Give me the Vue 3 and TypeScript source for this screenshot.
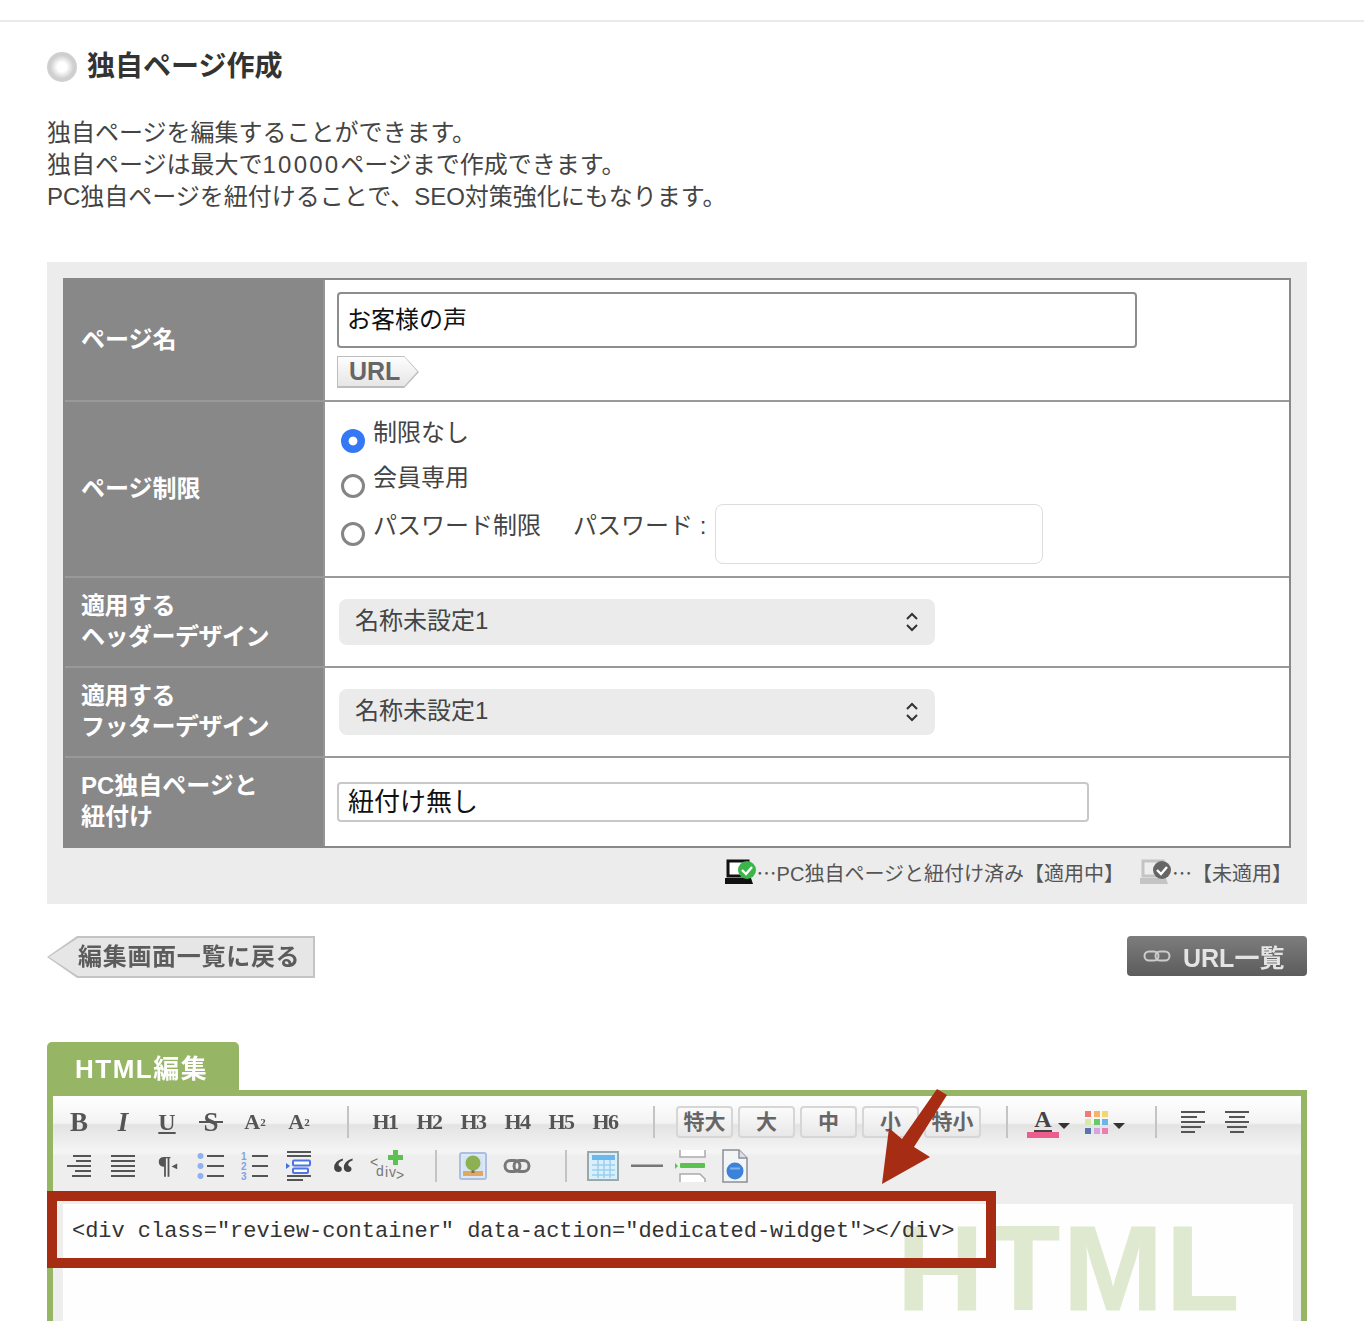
<script setup lang="ts">
const fmtTools = ['B', 'I', 'U', 'S']
const headings = ['H1', 'H2', 'H3', 'H4', 'H5', 'H6']
const sizes = ['特大', '大', '中', '小', '特小']
const palette = ['#f27a72', '#f6b36a', '#f0d86e', '#d8e8a8', '#6cc86e', '#6db4ec', '#5576b0', '#d6a4e0', '#f07cb4']
const rows = [
  { label: ['適用する', 'ヘッダーデザイン'] },
  { label: ['適用する', 'フッターデザイン'] },
]
</script>

<template>
  <div class="page">
    <div class="topbar"></div>
    <h1 class="heading"><span class="bullet"></span>独自ページ作成</h1>
    <p class="intro">
      独自ページを編集することができます。<br />
      独自ページは最大で<span class="digits">10000</span>ページまで作成できます。<br />
      PC独自ページを紐付けることで、SEO対策強化にもなります。
    </p>

    <section class="panel">
      <div class="form">
        <div class="row row-name">
          <div class="label">ページ名</div>
          <div class="cell">
            <input class="text-input name-input" value="お客様の声" />
            <span class="url-tag"><span>URL</span></span>
          </div>
        </div>
        <div class="row row-limit">
          <div class="label">ページ制限</div>
          <div class="cell limit-cell">
            <label class="radio-line"><input class="radio" type="radio" name="limit" checked />制限なし</label>
            <label class="radio-line second"><input class="radio" type="radio" name="limit" />会員専用</label>
            <div class="radio-line third">
              <input class="radio" type="radio" name="limit" />
              <span class="pw-label">パスワード制限</span>
              <span class="pw-label pw-second">パスワード :</span>
              <input class="pw-input" />
            </div>
          </div>
        </div>
        <div v-for="r in rows" :key="r.label[1]" class="row row-design">
          <div class="label design-label">{{ r.label[0] }}<br />{{ r.label[1] }}</div>
          <div class="cell select-cell">
            <div class="select">
              <span class="select-text">名称未設定1</span>
              <svg width="14" height="22" viewBox="0 0 14 22" fill="none" stroke="#333" stroke-width="2">
                <path d="M2 8l5-5 5 5M2 14l5 5 5-5" />
              </svg>
            </div>
          </div>
        </div>
        <div class="row row-design last">
          <div class="label">PC独自ページと<br />紐付け</div>
          <div class="cell link-cell">
            <input class="text-input link-input" value="紐付け無し" />
          </div>
        </div>
      </div>
      <div class="legend">
        <svg class="legend-icon" width="32" height="26" viewBox="0 0 32 26">
          <path d="M3 2h20v15H3z" fill="#fff" stroke="#111" stroke-width="3" />
          <path d="M0 19h26l2 6H0z" fill="#111" />
          <circle cx="22" cy="11" r="9" fill="#3bb54a" />
          <path d="M17 11l4 4 6-7" fill="none" stroke="#fff" stroke-width="2.4" />
        </svg>
        <span><span class="dots">…</span>PC独自ページと紐付け済み【適用中】</span>
        <svg class="legend-icon second" width="32" height="26" viewBox="0 0 32 26">
          <path d="M3 2h20v15H3z" fill="#eee" stroke="#c4c4c4" stroke-width="3" />
          <path d="M0 19h26l2 6H0z" fill="#c4c4c4" />
          <circle cx="22" cy="11" r="9" fill="#666" />
          <path d="M17 11l4 4 6-7" fill="none" stroke="#fff" stroke-width="2.4" />
        </svg>
        <span><span class="dots">…</span>【未適用】</span>
      </div>
    </section>

    <div class="actions">
      <a class="back-btn"><span class="back-inner"><span>編集画面一覧に戻る</span></span></a>
      <a class="url-btn">
        <svg width="28" height="12" viewBox="0 0 28 12" fill="none" stroke="#ccc" stroke-width="2">
          <rect x="1.500" y="1.500" width="14" height="9" rx="4.500" />
          <rect x="12.500" y="1.500" width="14" height="9" rx="4.500" />
        </svg>
        <span>URL一覧</span>
      </a>
    </div>

    <section class="editor-wrap">
      <div class="tab"><span>HTML編集</span></div>
      <div class="editor">
        <div class="toolbar">
          <div class="tool-row first">
            <span v-for="t in fmtTools" :key="t" class="tool glyph" :class="'g-' + t">{{ t }}</span>
            <span class="tool glyph small">A<sup>2</sup></span>
            <span class="tool glyph small">A<sub>2</sub></span>
            <span class="sep s1"></span>
            <span v-for="h in headings" :key="h" class="tool glyph heading-glyph">{{ h }}</span>
            <span class="sep s2"></span>
            <span class="sizes">
              <span v-for="s in sizes" :key="s" class="size-btn">{{ s }}</span>
            </span>
            <span class="sep s3"></span>
            <span class="color-tool">
              <span class="color-a">A</span>
            </span>
            <span class="caret near"></span>
            <span class="swatches">
              <i v-for="c in palette" :key="c" :style="{ background: c }"></i>
            </span>
            <span class="caret"></span>
            <span class="sep s4"></span>
            <span class="tool">
              <svg width="26" height="24" viewBox="0 0 26 24" stroke="#555" stroke-width="2.2">
                <path d="M1 2h24M1 7h16M1 12h24M1 17h20M1 22h14" />
              </svg>
            </span>
            <span class="tool">
              <svg width="26" height="24" viewBox="0 0 26 24" stroke="#555" stroke-width="2.2">
                <path d="M1 2h24M5 7h16M1 12h24M3 17h20M6 22h14" />
              </svg>
            </span>
          </div>
          <div class="tool-row">
            <span class="tool">
              <svg width="26" height="24" viewBox="0 0 26 24" stroke="#555" stroke-width="2.2">
                <path d="M7 2h18M10 7h15M1 12h24M9 17h16M6 22h19" />
              </svg>
            </span>
            <span class="tool">
              <svg width="26" height="24" viewBox="0 0 26 24" stroke="#555" stroke-width="2.2">
                <path d="M1 2h24M1 7h24M1 12h24M1 17h24M1 22h24" />
              </svg>
            </span>
            <span class="tool glyph pilcrow">¶<small>◂</small></span>
            <span class="tool">
              <svg width="28" height="28" viewBox="0 0 28 28">
                <g fill="#8fb2ee"><circle cx="3.500" cy="4" r="3" /><circle cx="3.500" cy="14" r="3" /><circle cx="3.500" cy="24" r="3" /></g>
                <path d="M10 4h17M10 14h17M10 24h17" stroke="#555" stroke-width="2.200" />
              </svg>
            </span>
            <span class="tool">
              <svg width="28" height="30" viewBox="0 0 28 30">
                <g fill="#7da4ea" font-family="Liberation Sans, sans-serif" font-size="10" font-weight="700">
                  <text x="0" y="9">1</text><text x="0" y="19">2</text><text x="0" y="29">3</text>
                </g>
                <path d="M11 5h16M11 15h16M11 25h16" stroke="#555" stroke-width="2.200" />
              </svg>
            </span>
            <span class="tool">
              <svg width="26" height="32" viewBox="0 0 26 32">
                <path d="M1 2h24M1 6h24M1 26h24M1 30h16" stroke="#555" stroke-width="2.200" />
                <path d="M0 13l4 3-4 3z" fill="#3f6fe0" />
                <rect x="7" y="10.500" width="17" height="5" rx="1" fill="#fff" stroke="#4d76e4" stroke-width="2" />
                <rect x="7" y="18.500" width="15" height="4.500" rx="1" fill="#fff" stroke="#4d76e4" stroke-width="2" />
              </svg>
            </span>
            <span class="tool glyph quote">“</span>
            <span class="tool">
              <svg width="40" height="36" viewBox="0 0 40 36">
                <text x="3 9 18 22 29" y="19 28 29 29 32" font-family="Liberation Sans, sans-serif" font-size="14" fill="#777">&lt;div&gt;</text>
                <path d="M26 2h5v5h5v5h-5v5h-5v-5h-5V7h5z" fill="#5cc24f" />
              </svg>
            </span>
            <span class="sep s5"></span>
            <span class="tool">
              <svg width="28" height="28" viewBox="0 0 28 28">
                <rect x="1" y="1" width="26" height="26" rx="2" fill="#dfe7f5" stroke="#a9bfe3" stroke-width="2" />
                <rect x="4" y="4" width="20" height="20" fill="#d4e4f2" />
                <rect x="4" y="19" width="20" height="5" fill="#e0a860" />
                <rect x="12.500" y="14" width="3" height="7" fill="#8a6d3b" />
                <circle cx="14" cy="11" r="7.500" fill="#8cb052" />
              </svg>
            </span>
            <span class="tool">
              <svg width="28" height="16" viewBox="0 0 28 16" fill="none" stroke="#777" stroke-width="3">
                <rect x="2" y="2.500" width="15" height="11" rx="5.500" />
                <rect x="11" y="2.500" width="15" height="11" rx="5.500" />
              </svg>
            </span>
            <span class="sep s6"></span>
            <span class="tool">
              <svg width="32" height="30" viewBox="0 0 32 30">
                <rect x="1" y="1" width="30" height="28" fill="#d9effb" stroke="#9aa" stroke-width="2" />
                <rect x="5" y="4" width="23" height="5" fill="#6cb8ee" />
                <path d="M5 14h23M5 19h23M5 24h23M11 9v18M17 9v18M23 9v18" stroke="#9bd0f0" stroke-width="1.500" />
              </svg>
            </span>
            <span class="tool">
              <svg width="32" height="4" viewBox="0 0 32 4"><rect width="32" height="2.500" y="0.500" fill="#777" /></svg>
            </span>
            <span class="tool">
              <svg width="32" height="32" viewBox="0 0 32 32" fill="none">
                <path d="M5 0v7h25V0" stroke="#aaa" stroke-width="1.500" fill="#fff" />
                <path d="M0 13l3 3-3 3z" fill="#5cc24f" />
                <rect x="5" y="13" width="25" height="5" rx="1" fill="#5cc24f" />
                <path d="M5 32v-8h20l5 5v3" stroke="#aaa" stroke-width="1.500" fill="#fff" />
              </svg>
            </span>
            <span class="tool">
              <svg width="26" height="34" viewBox="0 0 26 34">
                <path d="M1 1h16l8 8v24H1z" fill="#f2f4f6" stroke="#8a9095" stroke-width="1.500" />
                <path d="M17 1v8h8" fill="#dde" stroke="#8a9095" stroke-width="1.500" />
                <circle cx="13" cy="22" r="8.500" fill="#3b82d8" />
                <path d="M8 19.500h10" stroke="#7fb2ea" stroke-width="2" />
              </svg>
            </span>
          </div>
        </div>
        <div class="editor-body">
          <div class="code-area">
            <span class="watermark">HTML</span>
            <code class="code">&lt;div class="review-container" data-action="dedicated-widget"&gt;&lt;/div&gt;</code>
          </div>
        </div>
      </div>
      <div class="highlight"></div>
      <svg class="arrow" width="90" height="110" viewBox="0 0 90 110">
        <path d="M67 4L77 10L44 62L60 72L12 99L19 43L32 54Z" fill="#a62c14" />
      </svg>
    </section>
  </div>
</template>

<style>
html,
body {
  margin: 0;
  background: #fff;
}
</style>

<style scoped>
.page {
  height: 1321px;
  overflow: hidden;
  box-sizing: border-box;
  padding: 0 57px 0 47px;
  font-family: "Liberation Sans", "Noto Sans CJK JP", sans-serif;
  color: #444;
  position: relative;
}
.topbar {
  height: 20px;
  border-bottom: 2px solid #e9eaee;
  margin: 0 -57px 0 -47px;
}
.heading {
  display: flex;
  align-items: center;
  height: 30px;
  margin: 30px 0 0;
  font-size: 28px;
  line-height: 30px;
  font-weight: 700;
  color: #333;
}
.bullet {
  width: 30px;
  height: 30px;
  margin-right: 10px;
  border-radius: 50%;
  background: radial-gradient(circle, #fff 0 22%, #cfcfcf 55%, #d0d0d0 88%, #eaeaea 100%);
}
.intro {
  margin: 35px 0 49px;
  font-size: 24px;
  line-height: 32px;
  color: #444;
}
.digits {
  letter-spacing: 2.200px;
}
.panel {
  background: #ececec;
  padding: 16px 16px 0;
  height: 642px;
  box-sizing: border-box;
}
.form {
  border: 2px solid #888;
  background: #fff;
}
.row {
  display: grid;
  grid-template-columns: 258px 1fr;
  border-bottom: 2px solid #999;
}
.row.last {
  border-bottom: 0;
}
.row-name {
  height: 120px;
}
.row-limit {
  height: 174px;
}
.row-design {
  height: 88px;
}
.label {
  display: block;
  align-content: center;
  background: #888;
  color: #fff;
  padding: 0 0 2px 16px;
  border-right: 2px solid #959595;
  margin-right: -2px;
  font-size: 24px;
  line-height: 31px;
  font-weight: 700;
}
.design-label {
  letter-spacing: -0.500px;
}
.cell {
  padding-left: 14px;
  margin-left: 2px;
  min-width: 0;
}
.text-input {
  display: block;
  box-sizing: border-box;
  background: #fff;
  color: #111;
  font: inherit;
  outline: none;
}
.name-input {
  width: 800px;
  height: 56px;
  margin: 12px 0 8px -2px;
  padding: 0 8px 6px;
  border: 2px solid #8d8d8d;
  border-radius: 4px;
  font-size: 24px;
}
.url-tag {
  display: block;
  width: 82px;
  height: 32px;
  margin-left: -2px;
  background: #bdbdbd;
  clip-path: polygon(0 0, 82% 0, 100% 50%, 82% 100%, 0 100%);
  padding: 1px 0 2px 1px;
  box-sizing: border-box;
}
.url-tag span {
  display: block;
  height: 100%;
  background: linear-gradient(#fdfdfd, #e6e6e6);
  clip-path: polygon(0 0, 82% 0, 98% 50%, 82% 100%, 0 100%);
  font-weight: 700;
  font-size: 25px;
  line-height: 29px;
  color: #666;
  padding-left: 11px;
  box-sizing: border-box;
}
.limit-cell {
  padding-top: 15px;
  font-size: 24px;
  line-height: 32px;
  color: #444;
}
.radio-line {
  display: flex;
  align-items: flex-start;
  height: 32px;
}
.radio-line.second {
  margin-top: 13px;
}
.radio-line.third {
  margin-top: 10px;
  height: 60px;
}
.radio {
  appearance: none;
  box-sizing: border-box;
  width: 24px;
  height: 24px;
  margin: 12px 8px 0 2px;
  border: 3px solid #858585;
  border-radius: 50%;
  background: #fff;
  flex: none;
}
.radio:checked {
  border: 0;
  background: radial-gradient(circle, #fff 0 4px, #3478f6 4.800px);
}
.third .radio {
  margin-top: 18px;
}
.pw-label {
  margin-top: 6px;
}
.pw-second {
  margin-left: 32px;
}
.pw-input {
  width: 328px;
  height: 60px;
  margin-left: 9px;
  box-sizing: border-box;
  border: 1px solid #ddd;
  border-radius: 8px;
  background: #fff;
  outline: none;
}
.select-cell,
.link-cell {
  display: flex;
  align-items: center;
}
.select {
  display: flex;
  align-items: center;
  justify-content: space-between;
  box-sizing: border-box;
  width: 596px;
  height: 46px;
  padding: 0 16px;
  border-radius: 8px;
  background: #ebebeb;
  color: #444;
  font-size: 24px;
}
.select-text {
  padding-bottom: 8px;
}
.link-input {
  width: 752px;
  height: 40px;
  margin-left: -2px;
  padding: 0 9px 6px;
  border: 2px solid #c8c8c8;
  border-radius: 4px;
  font-size: 26px;
}
.legend {
  display: flex;
  justify-content: flex-end;
  align-items: center;
  height: 48px;
  margin-right: -1px;
  font-size: 20px;
  color: #555;
}
.dots {
  display: inline-block;
  font-family: "Noto Sans CJK JP", sans-serif;
}
.legend-icon.second {
  margin-left: 16px;
}
.actions {
  display: flex;
  justify-content: space-between;
  align-items: flex-start;
  margin-top: 32px;
}
.back-btn {
  display: block;
  width: 268px;
  height: 42px;
  background: #c4c4c4;
  clip-path: polygon(0 50%, 30px 0, 100% 0, 100% 100%, 30px 100%);
}
.back-inner {
  display: block;
  height: 38px;
  margin: 2px;
  background: #e6e6e6;
  clip-path: polygon(0 50%, 29px 0, 100% 0, 100% 100%, 29px 100%);
  padding-left: 29px;
  font-size: 24px;
  line-height: 38px;
  letter-spacing: 0.700px;
  font-weight: 700;
  color: #5c5c5c;
}
.back-inner span {
  display: block;
  filter: blur(0.500px);
}
.url-btn {
  display: flex;
  align-items: center;
  gap: 12px;
  box-sizing: border-box;
  width: 180px;
  height: 40px;
  padding-left: 16px;
  border-radius: 4px;
  background: linear-gradient(#7d7d7d, #5c5c5c);
  color: #e4e4e4;
  font-size: 25px;
  font-weight: 700;
}
.url-btn span {
  filter: blur(0.600px);
}
.editor-wrap {
  position: relative;
  margin-top: 64px;
}
.tab {
  width: 192px;
  height: 48px;
  box-sizing: border-box;
  padding-left: 28px;
  border-radius: 5px 5px 0 0;
  background: #96b565;
  color: #fff;
  font-size: 26px;
  line-height: 54px;
  letter-spacing: 1.500px;
  font-weight: 700;
}
.tab span {
  display: block;
  filter: blur(0.500px);
}
.editor {
  border: 6px solid #96b565;
  border-bottom: 0;
  height: 300px;
  background: #eee;
}
.toolbar {
  height: 108px;
  padding-left: 4px;
  box-sizing: border-box;
  background: linear-gradient(#fff 0, #f3f3f3 27px, #e3e3e3 29px, #f5f5f5 56px, #eee 60px, #eee 100%);
}
.tool-row {
  display: flex;
  align-items: center;
  height: 36px;
  color: #555;
}
.tool-row.first {
  height: 52px;
}
.tool {
  flex: none;
  width: 44px;
  display: flex;
  align-items: center;
  justify-content: center;
}
.glyph {
  font-family: "Liberation Serif", serif;
  font-weight: 700;
  font-size: 27px;
  line-height: 32px;
  color: #555;
  filter: blur(0.300px);
}
.g-I {
  font-style: italic;
}
.g-U {
  text-decoration: underline;
  font-size: 24px;
}
.g-S {
  position: relative;
}
.g-S::after {
  content: "";
  position: absolute;
  left: 10px;
  right: 10px;
  top: 15px;
  height: 2px;
  background: #555;
}
.small {
  font-size: 22px;
}
.small sup,
.small sub {
  font-size: 11px;
  line-height: 0;
}
.heading-glyph {
  font-size: 22px;
  letter-spacing: -1.500px;
}
.pilcrow {
  font-size: 26px;
}
.pilcrow small {
  font-size: 10px;
}
.quote {
  font-size: 44px;
  line-height: 26px;
  padding-top: 16px;
  height: 20px;
  color: #444;
}
.sep {
  flex: none;
  width: 2px;
  height: 32px;
  background: #c4c4c4;
  margin: 0 14px 0 26px;
}
.s2 {
  margin-right: 21px;
}
.s3 {
  margin: 0 19px 0 25px;
}
.s4 {
  margin: 0 14px 0 30px;
}
.sizes {
  flex: none;
  display: flex;
  gap: 5px;
}
.size-btn {
  box-sizing: border-box;
  width: 57px;
  height: 32px;
  border: 2px solid #d6d6d6;
  border-radius: 4px;
  background: linear-gradient(#fbfbfb, #e8e8e8);
  text-align: center;
  font-size: 21px;
  line-height: 28px;
  font-weight: 700;
  color: #666;
}
.color-tool {
  flex: none;
  width: 32px;
  height: 32px;
  text-align: center;
  border-bottom: 6px solid #ec5d8d;
  box-sizing: border-box;
}
.color-a {
  font-family: "Liberation Serif", serif;
  font-weight: 700;
  font-size: 24px;
  line-height: 26px;
  color: #444;
  display: block;
  border-bottom: 2px solid #444;
  margin: 0 7px;
  height: 24px;
}
.caret {
  flex: none;
  width: 0;
  height: 0;
  margin: 8px 0 0 5px;
  border: 6px solid transparent;
  border-top: 6px solid #333;
  border-bottom: 0;
}
.caret.near {
  margin-left: -1px;
}
.swatches {
  flex: none;
  display: grid;
  grid-template-columns: repeat(3, 6px);
  gap: 2.500px;
  margin-left: 15px;
}
.swatches i {
  display: block;
  height: 6px;
}
.editor-body {
  padding: 0 8px 0 10px;
}
.code-area {
  position: relative;
  height: 200px;
  background: #fefefe;
  overflow: hidden;
}
.watermark {
  position: absolute;
  left: 834px;
  top: 14px;
  font-size: 120px;
  line-height: 100px;
  letter-spacing: 3px;
  font-weight: 700;
  color: #dfe9d0;
  -webkit-text-stroke: 1px #dfe9d0;
}
.code {
  position: relative;
  display: block;
  padding: 16px 0 0 9px;
  font-family: "Liberation Mono", monospace;
  font-size: 22px;
  line-height: 24px;
  letter-spacing: -0.030px;
  color: #333;
  white-space: pre;
}
.highlight {
  position: absolute;
  left: 0;
  top: 149px;
  width: 949px;
  height: 77px;
  box-sizing: border-box;
  border: 10px solid #a62c14;
}
.arrow {
  position: absolute;
  left: 823px;
  top: 43px;
}
</style>
